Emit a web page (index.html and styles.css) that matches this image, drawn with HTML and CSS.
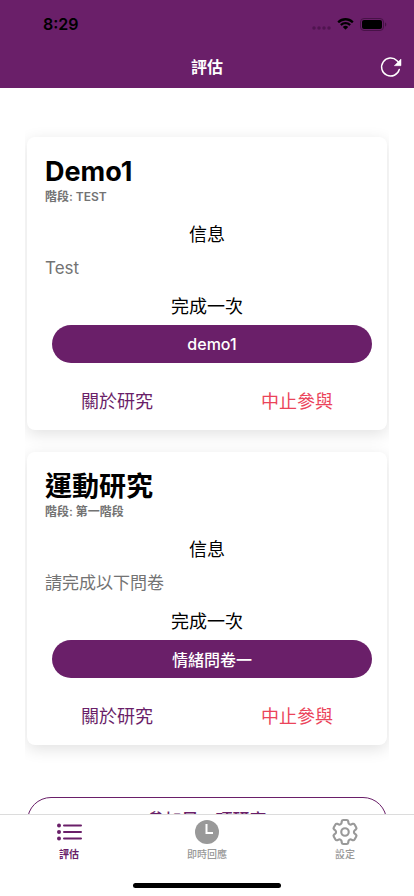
FILE: index.html
```html
<!DOCTYPE html>
<html lang="zh-Hant">
<head>
    <meta charset="UTF-8">
    <meta name="viewport" content="width=device-width, initial-scale=1.0">
    <title>評估</title>
    <link rel="stylesheet" href="styles.css">
</head>
<body>
    <header class="header">
        <div class="status-bar">
            <span class="time">8:29</span>
            <div class="status-icons">
                <svg class="dots" viewBox="0 0 19 4" width="19" height="4">
                    <circle cx="2" cy="2" r="1.7"/>
                    <circle cx="7" cy="2" r="1.7"/>
                    <circle cx="12" cy="2" r="1.7"/>
                    <circle cx="17" cy="2" r="1.7"/>
                </svg>
                <svg viewBox="0 0 17 12" width="17" height="12">
                    <path d="M8.5 2.4c2.4 0 4.6.9 6.3 2.5.1.1.3.1.4 0l1.2-1.2c.1-.1.1-.3 0-.4a11.4 11.4 0 0 0-15.8 0c-.1.1-.1.3 0 .4l1.2 1.2c.1.1.3.1.4 0a9.1 9.1 0 0 1 6.3-2.5z"/>
                    <path d="M8.5 6.3c1.3 0 2.6.5 3.6 1.4.1.1.3.1.4 0l1.2-1.2c.1-.1.1-.3 0-.4a7.6 7.6 0 0 0-10.4 0c-.1.1-.1.3 0 .4l1.2 1.2c.1.1.3.1.4 0 1-.9 2.3-1.4 3.6-1.4z"/>
                    <path d="M11 9.2c.1-.1.1-.3 0-.4a3.8 3.8 0 0 0-5 0c-.1.1-.1.3 0 .4l2.3 2.3c.1.1.3.1.4 0z"/>
                </svg>
                <svg viewBox="0 0 27 13" width="27" height="13">
                    <rect class="battery-frame" x="0.5" y="0.5" width="23" height="12" rx="3.5"/>
                    <rect x="2" y="2" width="20" height="9" rx="2"/>
                    <path class="battery-tip" d="M25 4.5v4c.8-.3 1.3-1.1 1.3-2s-.5-1.7-1.3-2z"/>
                </svg>
            </div>
        </div>
        <div class="toolbar">
            <h1>評估</h1>
            <button class="refresh-btn" type="button" aria-label="Refresh">
                <svg viewBox="0 0 22 22" width="22" height="22">
                    <path class="refresh-arc" d="M19.3 13.4A9 9 0 1 1 17 4.7L19 6.7"/>
                    <path class="refresh-head" d="M21 3v6.7h-6.7z"/>
                </svg>
            </button>
        </div>
    </header>

    <main class="content">
        <div class="study-list">
            <section class="study-card">
                <h2>Demo1</h2>
                <p class="stage">階段: TEST</p>
                <h3>信息</h3>
                <p class="message">Test</p>
                <h3 class="once">完成一次</h3>
                <button class="survey-btn" type="button">demo1</button>
                <div class="card-links">
                    <a class="about" href="#about">關於研究</a>
                    <a class="leave" href="#leave">中止參與</a>
                </div>
            </section>
            <section class="study-card">
                <h2>運動研究</h2>
                <p class="stage">階段: 第一階段</p>
                <h3>信息</h3>
                <p class="message">請完成以下問卷</p>
                <h3 class="once">完成一次</h3>
                <button class="survey-btn" type="button">情緒問卷一</button>
                <div class="card-links">
                    <a class="about" href="#about">關於研究</a>
                    <a class="leave" href="#leave">中止參與</a>
                </div>
            </section>
        </div>
        <button class="join-btn" type="button">參加另一項研究</button>
    </main>

    <nav class="tab-bar">
        <a class="tab active" href="#surveys">
            <svg viewBox="0 0 28 28" width="28" height="28">
                <path class="list-lines" d="M9 7.5h17M9 14h17M9 20.5h17"/>
                <circle cx="4" cy="7.5" r="2"/>
                <circle cx="4" cy="14" r="2"/>
                <circle cx="4" cy="20.5" r="2"/>
            </svg>
            <span>評估</span>
        </a>
        <a class="tab" href="#momentary">
            <svg viewBox="0 0 28 28" width="28" height="28">
                <circle cx="14" cy="14" r="12"/>
                <path class="clock-hands" d="M13.5 6v9h6.5"/>
            </svg>
            <span>即時回應</span>
        </a>
        <a class="tab" href="#settings">
            <svg viewBox="1.5 1.5 21 21" width="28" height="28">
                <path class="gear" d="M9.594 3.94c.09-.542.56-.94 1.11-.94h2.593c.55 0 1.02.398 1.11.94l.213 1.281c.063.374.313.686.645.87.074.04.147.083.22.127.325.196.72.257 1.075.124l1.217-.456a1.125 1.125 0 0 1 1.37.49l1.296 2.247a1.125 1.125 0 0 1-.26 1.431l-1.003.827c-.293.241-.438.613-.43.992a7.723 7.723 0 0 1 0 .255c-.008.378.137.75.43.991l1.004.827c.424.35.534.955.26 1.43l-1.298 2.247a1.125 1.125 0 0 1-1.369.491l-1.217-.456c-.355-.133-.75-.072-1.076.124a6.47 6.47 0 0 1-.22.128c-.331.183-.581.495-.644.869l-.213 1.281c-.09.543-.56.94-1.11.94h-2.594c-.55 0-1.019-.398-1.11-.94l-.213-1.281c-.062-.374-.312-.686-.644-.87a6.52 6.52 0 0 1-.22-.127c-.325-.196-.72-.257-1.076-.124l-1.217.456a1.125 1.125 0 0 1-1.369-.49l-1.297-2.247a1.125 1.125 0 0 1 .26-1.431l1.004-.827c.292-.24.437-.613.43-.991a6.932 6.932 0 0 1 0-.255c.007-.38-.138-.751-.43-.992l-1.004-.827a1.125 1.125 0 0 1-.26-1.43l1.297-2.247a1.125 1.125 0 0 1 1.37-.491l1.216.456c.356.133.751.072 1.076-.124.072-.044.146-.086.22-.128.332-.183.582-.495.644-.869l.214-1.28Z"/>
                <circle class="gear" cx="12" cy="12" r="2.8"/>
            </svg>
            <span>設定</span>
        </a>
        <div class="home-indicator"></div>
    </nav>
</body>
</html>
```
FILE: styles.css
```css
* {
    box-sizing: border-box;
}

body {
    display: flex;
    flex-direction: column;
    height: 100vh;
    margin: 0;
    overflow: hidden;
    background-color: #fff;
    color: #000;
    font-family: Inter, "Noto Sans CJK TC", sans-serif;
}

h1, h2, h3, p {
    margin: 0;
}

a {
    text-decoration: none;
}

button {
    padding: 0;
    border: none;
    font-family: inherit;
    cursor: pointer;
}

svg {
    display: block;
}

/* Header */
.header {
    flex: none;
    background-color: #6a1f69;
}

.status-bar {
    display: flex;
    justify-content: space-between;
    align-items: center;
    height: 46px;
    padding: 2px 27px 0 43px;
    color: #000;
}

.time {
    font-size: 16px;
    font-weight: 600;
}

.status-icons {
    display: flex;
    align-items: center;
    gap: 6px;
}

.status-icons .dots {
    margin-top: 8px;
    fill: #501450;
}

.battery-frame {
    fill: none;
    stroke: #471247;
}

.battery-tip {
    fill: #471247;
}

.toolbar {
    display: grid;
    grid-template-columns: 1fr auto 1fr;
    align-items: center;
    height: 42px;
    padding: 0 12px;
}

.toolbar h1 {
    grid-column: 2;
    color: #fff;
    font-size: 16px;
    font-weight: 600;
    line-height: 24px;
}

.refresh-btn {
    justify-self: end;
    background: none;
}

.refresh-arc {
    fill: none;
    stroke: #fff;
    stroke-width: 1.5;
    stroke-linecap: round;
}

.refresh-head {
    fill: #fff;
    stroke: #fff;
    stroke-width: 0.5;
    stroke-linejoin: round;
}

/* Study cards */
.content {
    flex: 1;
    min-height: 0;
    overflow-x: hidden;
    overflow-y: auto;
    scrollbar-width: none;
    padding-top: 49px;
}

.study-list {
    display: flex;
    flex-direction: column;
    gap: 22px;
    margin: 0 25px;
    padding: 0 2px;
    overflow-x: clip;
}

.study-card {
    padding: 19px 18px 10px;
    border-radius: 8px;
    background-color: #fff;
    box-shadow: 0 4px 16px rgba(0, 0, 0, 0.12);
}

.study-card h2 {
    font-size: 27px;
    font-weight: 700;
    line-height: 32px;
}

.stage {
    color: #737373;
    font-size: 12px;
    font-weight: 600;
    line-height: 18px;
}

.study-card h3 {
    margin-top: 17px;
    font-size: 18px;
    font-weight: 400;
    line-height: 24px;
    text-align: center;
}

.message {
    margin-top: 9px;
    color: #737373;
    font-size: 17px;
    line-height: 24px;
}

.study-card .once {
    margin-top: 15px;
}

.survey-btn {
    display: block;
    width: calc(100% - 4px);
    height: 38px;
    margin: 6px 0 0 7px;
    border-radius: 19px;
    background-color: #6a1f69;
    color: #fff;
    font-size: 16px;
    font-weight: 500;
}

.card-links {
    display: grid;
    grid-template-columns: 1fr 1fr;
    margin: 21px -18px 0;
    font-size: 18px;
    line-height: 36px;
    text-align: center;
}

.about {
    color: #6a1f69;
}

.leave {
    color: #eb445a;
}

.join-btn {
    display: block;
    width: calc(100% - 54px);
    height: 48px;
    margin: 52px 27px 0;
    padding-bottom: 5px;
    border: 1px solid #6a1f69;
    border-radius: 24px;
    background-color: #fff;
    color: #6a1f69;
    font-size: 17px;
    font-weight: 500;
}

/* Tab bar */
.tab-bar {
    position: relative;
    display: grid;
    grid-template-columns: repeat(3, 1fr);
    flex: none;
    height: 82px;
    border-top: 1px solid #dcdcdc;
    background-color: #fff;
}

.tab {
    display: flex;
    flex-direction: column;
    align-items: center;
    padding-top: 3px;
    color: #999;
    font-size: 10px;
    font-weight: 500;
    line-height: 16px;
}

.tab.active {
    color: #6a1f69;
    font-weight: 600;
}

.tab svg {
    fill: currentColor;
}

.list-lines {
    stroke: currentColor;
    stroke-width: 2;
    stroke-linecap: round;
}

.clock-hands {
    fill: none;
    stroke: #fff;
    stroke-width: 2;
}

.tab .gear {
    fill: none;
    stroke: currentColor;
    stroke-width: 1.6;
    stroke-linejoin: round;
}

.home-indicator {
    position: absolute;
    bottom: 8px;
    left: 50%;
    width: 148px;
    height: 5px;
    border-radius: 3px;
    background-color: #000;
    transform: translateX(-50%);
}
```
